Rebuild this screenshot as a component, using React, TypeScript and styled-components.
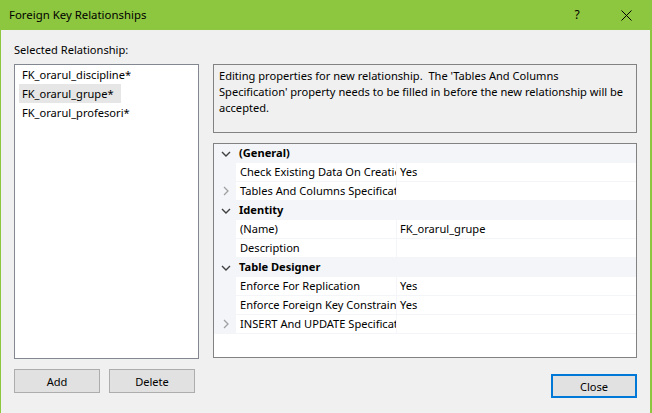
import React from "react";
import styled, { createGlobalStyle } from "styled-components";

const GREEN = "#8dc63f";
const FS = "11.1px";

const Global = createGlobalStyle`
  html, body { margin: 0; padding: 0; background: #f0f0f0; }
  body { font-family: "Noto Sans", "Open Sans", sans-serif; font-size: ${FS}; color: #000; }
  * { box-sizing: border-box; }
`;

const Window = styled.div`
  width: 652px;
  height: 413px;
  display: flex;
  flex-direction: column;
  overflow: hidden;
`;

const TitleBar = styled.div`
  height: 30px;
  background: ${GREEN};
  display: flex;
  align-items: center;
  padding-left: 9px;
  flex-shrink: 0;
`;

const Title = styled.div`
  flex: 1;
  font-size: 11.4px;
  line-height: 16px;
`;

const HelpGlyph = styled.div`
  width: 12px;
  margin-right: 38px;
  font-size: 12px;
  line-height: 16px;
  text-align: center;
`;

const CloseGlyph = styled.div`
  width: 11px;
  height: 11px;
  margin-right: 20px;
  display: flex;
`;

const Body = styled.div`
  flex: 1;
  background: #f0f0f0;
  border-left: 1px solid ${GREEN};
  border-right: 2px solid ${GREEN};
  padding: 12px 13px 0 13px;
  display: grid;
  grid-template-columns: 185px 424px;
  grid-template-rows: auto 1fr;
  column-gap: 14px;
`;

const Label = styled.div`
  grid-column: 1 / 2;
  line-height: 16px;
  margin-bottom: 6px;
`;

const LeftCol = styled.div`
  grid-column: 1 / 2;
  grid-row: 2;
  display: flex;
  flex-direction: column;
`;

const RightCol = styled.div`
  grid-column: 2 / 3;
  grid-row: 2;
  display: flex;
  flex-direction: column;
`;

const ListBox = styled.div`
  height: 295px;
  background: #fff;
  border: 1px solid #828790;
  display: flex;
  flex-direction: column;
  align-items: flex-start;
`;

const ListItem = styled.div<{ $selected?: boolean }>`
  height: 19px;
  line-height: 19px;
  margin-left: 4px;
  padding: 0 7px 0 3px;
  white-space: nowrap;
  background: ${(p) => (p.$selected ? "#e6e6e6" : "transparent")};
`;

const ButtonRow = styled.div`
  display: flex;
  gap: 9px;
  margin-top: 10px;
`;

const Button = styled.button<{ $default?: boolean }>`
  width: 86px;
  height: 24px;
  padding: 0;
  font-family: inherit;
  font-size: ${FS};
  color: #000;
  background: #e1e1e1;
  border: ${(p) => (p.$default ? "2px solid #0078d7" : "1px solid #adadad")};
`;

const Description = styled.div`
  height: 69px;
  border: 1px solid #828282;
  background: #f0f0f0;
  padding: 3px 5px 0 5px;
  line-height: 16px;
`;

const Grid = styled.div`
  margin-top: 10px;
  height: 215px;
  border: 1px solid #828282;
  background: #fff;
  display: flex;
  flex-direction: column;
`;

const Row = styled.div<{ $category?: boolean }>`
  height: 19px;
  display: grid;
  grid-template-columns: 21px 160px 1fr;
  column-gap: ${(p) => (p.$category ? "0" : "1px")};
  padding-bottom: ${(p) => (p.$category ? "0" : "1px")};
  background: #f3f5f9;
`;

const Margin = styled.div`
  display: flex;
  align-items: center;
  justify-content: center;
  padding-left: 2px;
`;

const NameCell = styled.div<{ $category?: boolean }>`
  background: ${(p) => (p.$category ? "transparent" : "#fff")};
  font-weight: ${(p) => (p.$category ? 700 : 400)};
  line-height: 18px;
  padding-left: 4px;
  white-space: nowrap;
  overflow: hidden;
  grid-column: ${(p) => (p.$category ? "2 / 4" : "auto")};
`;

const ValueCell = styled.div`
  background: #fff;
  line-height: 18px;
  padding-left: 3px;
  white-space: nowrap;
  overflow: hidden;
`;

const CloseRow = styled.div`
  display: flex;
  justify-content: flex-end;
  margin-top: 16px;
`;

const ChevronDown = () => (
  <svg width="10" height="6" viewBox="0 0 10 6">
    <path d="M1 1 L5 5 L9 1" fill="none" stroke="#404040" strokeWidth="1.4" />
  </svg>
);

const ChevronRight = () => (
  <svg width="6" height="10" viewBox="0 0 6 10">
    <path d="M1 1 L5 5 L1 9" fill="none" stroke="#a0a0a0" strokeWidth="1.3" />
  </svg>
);

type Prop = { name: string; value?: string; expandable?: boolean };
type Section = { title: string; props: Prop[] };

const sections: Section[] = [
  {
    title: "(General)",
    props: [
      { name: "Check Existing Data On Creation Or Re-Enabling", value: "Yes" },
      { name: "Tables And Columns Specification", expandable: true },
    ],
  },
  {
    title: "Identity",
    props: [
      { name: "(Name)", value: "FK_orarul_grupe" },
      { name: "Description" },
    ],
  },
  {
    title: "Table Designer",
    props: [
      { name: "Enforce For Replication", value: "Yes" },
      { name: "Enforce Foreign Key Constraint", value: "Yes" },
      { name: "INSERT And UPDATE Specification", expandable: true },
    ],
  },
];

export default function App() {
  return (
    <>
      <Global />
      <Window>
        <TitleBar>
          <Title>Foreign Key Relationships</Title>
          <HelpGlyph>?</HelpGlyph>
          <CloseGlyph>
            <svg width="11" height="11" viewBox="0 0 11 11">
              <path d="M0.5 0.5 L10.5 10.5 M10.5 0.5 L0.5 10.5" stroke="#000" strokeWidth="1" />
            </svg>
          </CloseGlyph>
        </TitleBar>
        <Body>
          <Label>Selected Relationship:</Label>
          <LeftCol>
            <ListBox>
              <ListItem>FK_orarul_discipline*</ListItem>
              <ListItem $selected>FK_orarul_grupe*</ListItem>
              <ListItem>FK_orarul_profesori*</ListItem>
            </ListBox>
            <ButtonRow>
              <Button>Add</Button>
              <Button>Delete</Button>
            </ButtonRow>
          </LeftCol>
          <RightCol>
            <Description>
              Editing properties for new relationship.&nbsp; The 'Tables And Columns
              <br />
              Specification' property needs to be filled in before the new relationship will be
              <br />
              accepted.
            </Description>
            <Grid>
              {sections.map((s) => (
                <React.Fragment key={s.title}>
                  <Row $category>
                    <Margin>
                      <ChevronDown />
                    </Margin>
                    <NameCell $category>{s.title}</NameCell>
                  </Row>
                  {s.props.map((p) => (
                    <Row key={p.name}>
                      <Margin>{p.expandable ? <ChevronRight /> : null}</Margin>
                      <NameCell>{p.name}</NameCell>
                      <ValueCell>{p.value ?? ""}</ValueCell>
                    </Row>
                  ))}
                </React.Fragment>
              ))}
            </Grid>
            <CloseRow>
              <Button $default>Close</Button>
            </CloseRow>
          </RightCol>
        </Body>
      </Window>
    </>
  );
}
